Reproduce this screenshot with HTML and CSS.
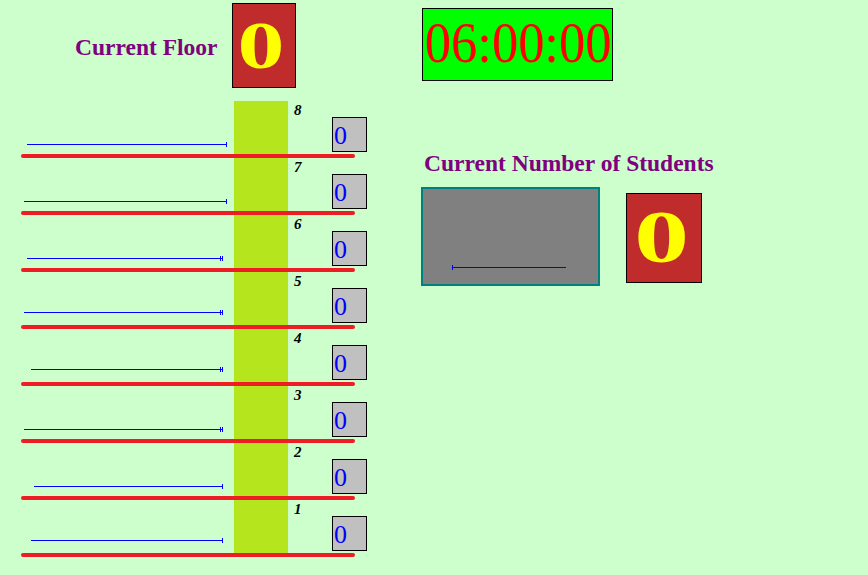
FILE: index.html
```html
<!DOCTYPE html>
<html>
<head>
<meta charset="utf-8">
<link rel="stylesheet" href="styles.css">
</head>
<body>
<div class="page">
  <section class="left">
    <header class="floor-head">
      <h1 class="label">Current Floor</h1>
      <div class="bigbox floor-box"><span class="big-digit">0</span></div>
    </header>
    <div class="building">
      <div class="shaft"></div>
      <div class="floors">
        <div class="floor"><span class="num">8</span><span class="queue tick1" style="--x:27px;--w:200px;--y:43px"></span><span class="count">0</span><span class="slab"></span></div>
        <div class="floor"><span class="num">7</span><span class="queue tick1" style="--x:24px;--w:203px;--y:43px"></span><span class="count">0</span><span class="slab"></span></div>
        <div class="floor"><span class="num">6</span><span class="queue tick2" style="--x:27px;--w:196px;--y:43px"></span><span class="count">0</span><span class="slab"></span></div>
        <div class="floor"><span class="num">5</span><span class="queue tick2" style="--x:24px;--w:199px;--y:40px"></span><span class="count">0</span><span class="slab"></span></div>
        <div class="floor"><span class="num">4</span><span class="queue tick2" style="--x:31px;--w:192px;--y:40px"></span><span class="count">0</span><span class="slab"></span></div>
        <div class="floor"><span class="num">3</span><span class="queue tick2" style="--x:24px;--w:199px;--y:43px"></span><span class="count">0</span><span class="slab"></span></div>
        <div class="floor"><span class="num">2</span><span class="queue tick1" style="--x:34px;--w:189px;--y:43px"></span><span class="count">0</span><span class="slab"></span></div>
        <div class="floor"><span class="num">1</span><span class="queue tick1" style="--x:31px;--w:192px;--y:40px"></span><span class="count">0</span><span class="slab"></span></div>
      </div>
    </div>
  </section>
  <section class="right">
    <div class="timer"><span class="timer-text">06:00:00</span></div>
    <h2 class="label students-title">Current Number of Students</h2>
    <div class="stats">
      <div class="panel"><span class="panel-bar"></span></div>
      <div class="bigbox count-box"><span class="big-digit">0</span></div>
    </div>
  </section>
</div>
</body>
</html>
```

FILE: styles.css
```css
html, body {
  margin: 0;
  padding: 0;
}
body {
  background: #ccffcc;
  width: 868px;
  height: 575px;
  overflow: hidden;
  font-family: "Liberation Serif", "Times New Roman", serif;
}
.page {
  display: flex;
  align-items: flex-start;
}
.left {
  width: 421px;
  flex: none;
}
.label {
  margin: 0;
  font-size: 23.5px;
  font-weight: bold;
  color: #800080;
  line-height: 27px;
}
.floor-head {
  display: flex;
  align-items: center;
  padding-top: 3px;
  padding-left: 75px;
  gap: 14px;
}
.floor-head .label {
  padding-top: 3px;
}
.bigbox {
  box-sizing: border-box;
  border: 1px solid #000;
  background: #c02b2b;
  color: #ffff00;
  font-weight: bold;
  text-align: center;
  overflow: hidden;
}
.big-digit {
  display: block;
  transform-origin: center;
}
.floor-box {
  width: 64px;
  height: 85px;
  font-size: 67px;
  line-height: 83px;
  padding-right: 6px;
}
.floor-box .big-digit {
  transform: scaleX(1.4);
}
.building {
  position: relative;
  margin-top: 13px;
}
.shaft {
  position: absolute;
  left: 234px;
  top: 0;
  width: 54px;
  height: 452px;
  background: #b5e61d;
}
.floors {
  position: relative;
  display: flex;
  flex-direction: column;
}
.floor {
  position: relative;
  height: 57px;
}
.num {
  position: absolute;
  left: 294px;
  top: 2px;
  font-size: 15px;
  line-height: 15px;
  font-weight: bold;
  font-style: italic;
  color: #000;
}
.queue {
  position: absolute;
  left: var(--x);
  top: var(--y);
  width: var(--w);
  height: 1px;
  background: #0000ff;
}
.queue::after,
.tick2::before {
  content: "";
  position: absolute;
  top: -2px;
  width: 1px;
  height: 5px;
  background: #0000ff;
}
.queue::after {
  right: 0;
}
.tick2::before {
  right: 2px;
}
.count {
  position: absolute;
  left: 332px;
  top: 16px;
  box-sizing: border-box;
  width: 35px;
  height: 35px;
  border: 1px solid #000;
  background: #c0c0c0;
  color: #0000ff;
  font-size: 26px;
  line-height: 26px;
  padding-top: 5px;
  padding-left: 1px;
  z-index: 1;
}
.slab {
  position: absolute;
  left: 21px;
  top: 53px;
  width: 334px;
  height: 4px;
  border-radius: 2px;
  background: #ee1c25;
}
.right {
  flex: none;
  display: flex;
  flex-direction: column;
  align-items: flex-start;
}
.timer {
  box-sizing: border-box;
  margin-top: 8px;
  margin-left: 1px;
  width: 191px;
  height: 73px;
  border: 1px solid #000;
  background: #00ff00;
  overflow: hidden;
}
.timer-text {
  display: block;
  color: #ff0000;
  font-size: 58px;
  line-height: 67px;
  padding-left: 2px;
  white-space: nowrap;
  transform: scaleX(0.905);
  transform-origin: left center;
}
.students-title {
  margin-top: 69px;
  margin-left: 3px;
  white-space: nowrap;
}
.stats {
  display: flex;
  align-items: flex-start;
  gap: 26px;
  margin-top: 10px;
}
.panel {
  box-sizing: border-box;
  width: 179px;
  height: 99px;
  border: 2px solid #008080;
  background: #808080;
  padding-top: 78px;
  padding-left: 29px;
}
.panel-bar {
  display: block;
  position: relative;
  width: 114px;
  height: 1px;
  background: #0000ff;
}
.panel-bar::before {
  content: "";
  position: absolute;
  left: 0;
  top: -2px;
  width: 1px;
  height: 5px;
  background: #0000ff;
}
.count-box {
  margin-top: 6px;
  width: 76px;
  height: 90px;
  font-size: 73px;
  line-height: 88px;
  padding-right: 5px;
}
.count-box .big-digit {
  transform: scaleX(1.5);
}
```
